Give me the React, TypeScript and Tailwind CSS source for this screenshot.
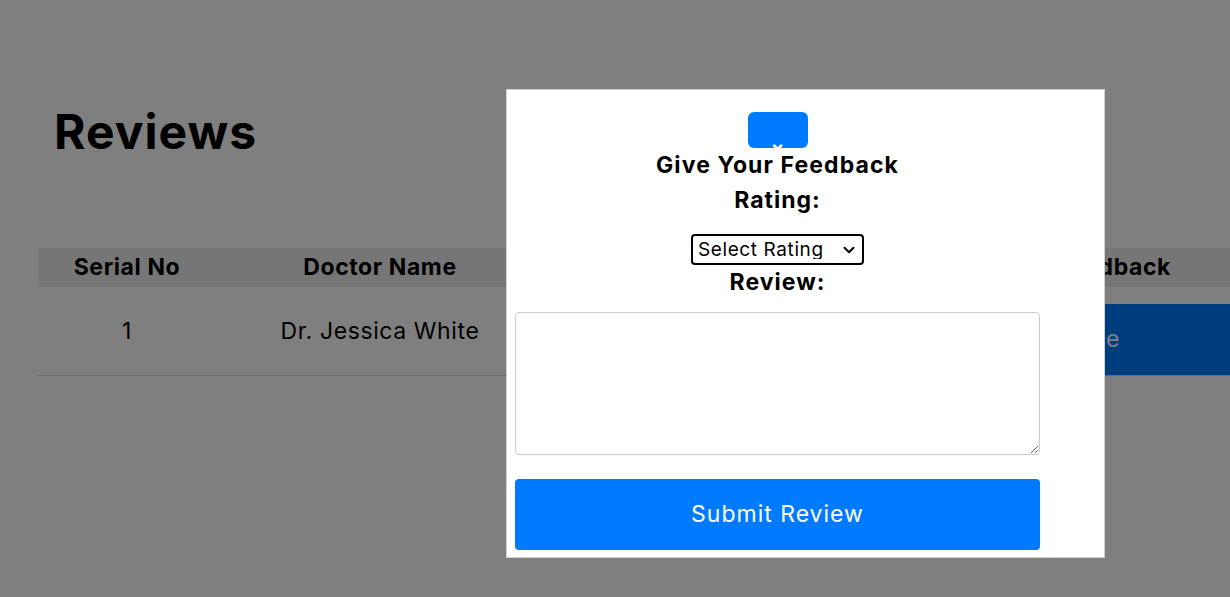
import React from 'react';
import { ChevronDown } from 'lucide-react';

const reviews = [{ id: 1, doctor: 'Dr. Jessica White', rating: '5', review: 'Great care' }];

function ReviewsTable() {
  return (
    <div className="w-[1250px]">
      {/* header */}
      <div className="grid grid-cols-[178px_328px_234px_234px_276px] h-[39px] items-center bg-[#ececec] text-[23px] tracking-[0.6px] font-bold text-black">
        <div className="text-center">Serial No</div>
        <div className="text-center">Doctor Name</div>
        <div className="text-center">Rating</div>
        <div className="text-center">Review</div>
        <div className="text-right pr-[117px]">Feedback</div>
      </div>
      {reviews.map((r) => (
        <div
          key={r.id}
          className="grid grid-cols-[178px_328px_234px_234px_276px] h-[89px] border-b border-[#d6d6d6] text-[23px] tracking-[0.6px] text-black"
        >
          <div className="self-center text-center">{r.id}</div>
          <div className="self-center text-center">{r.doctor}</div>
          <div className="self-center text-center">{r.rating}</div>
          <div className="self-center text-center">{r.review}</div>
          <div className="self-end">
            <button className="h-[71px] w-[276px] bg-[#007bff] text-white text-[23px] text-right pr-[168px]">
              Done
            </button>
          </div>
        </div>
      ))}
    </div>
  );
}

export default function App() {
  return (
    <div className="relative h-[597px] w-full overflow-hidden bg-white font-['Inter',sans-serif] text-black">
      <div className="pl-[38px]">
        <h1 className="pl-[16px] pt-[108px] h-[156px] text-[48px] leading-none font-bold tracking-[1px]">Reviews</h1>
        <div className="mt-[92px]">
          <ReviewsTable />
        </div>
      </div>

      {/* overlay */}
      <div className="fixed inset-0 bg-black/50" />

      {/* modal */}
      <div className="fixed left-[506px] top-[89px] w-[599px] h-[469px] bg-white border border-[#d0d0d0]">
        <div className="pl-[8px] pt-[22px] w-[533px]">
          <div className="flex flex-col items-center w-[525px]">
            <button className="relative w-[60px] h-[36px] rounded-md bg-[#007bff]">
              <span className="absolute left-1/2 -translate-x-1/2 top-[26px] text-[20px] leading-none font-bold text-white">
                ×
              </span>
            </button>
            <h2 className="h-[35px] leading-[35px] text-[23px] tracking-[1.1px] font-bold">Give Your Feedback</h2>
            <label className="h-[35px] leading-[35px] text-[23px] tracking-[1px] font-bold">Rating:</label>
            <div className="relative mt-[16px] w-[173px] h-[31px]">
              <select className="appearance-none w-full h-full border-2 border-black rounded-[4px] bg-white pl-[5px] text-[19px] tracking-[0.6px] leading-none">
                <option>Select Rating</option>
                <option>1</option>
                <option>2</option>
                <option>3</option>
                <option>4</option>
                <option>5</option>
              </select>
              <ChevronDown className="pointer-events-none absolute right-[6px] top-[7px] w-[18px] h-[18px]" strokeWidth={2.75} />
            </div>
            <label className="h-[35px] leading-[35px] text-[23px] tracking-[1px] font-bold">Review:</label>
            <textarea className="mt-[12px] w-[525px] h-[143px] border border-[#cccccc] rounded-[4px] bg-white" />
            <button className="mt-[24px] w-[525px] h-[71px] rounded-[4px] bg-[#007bff] text-white text-[23px] tracking-[1px]">
              Submit Review
            </button>
          </div>
        </div>
      </div>
    </div>
  );
}
